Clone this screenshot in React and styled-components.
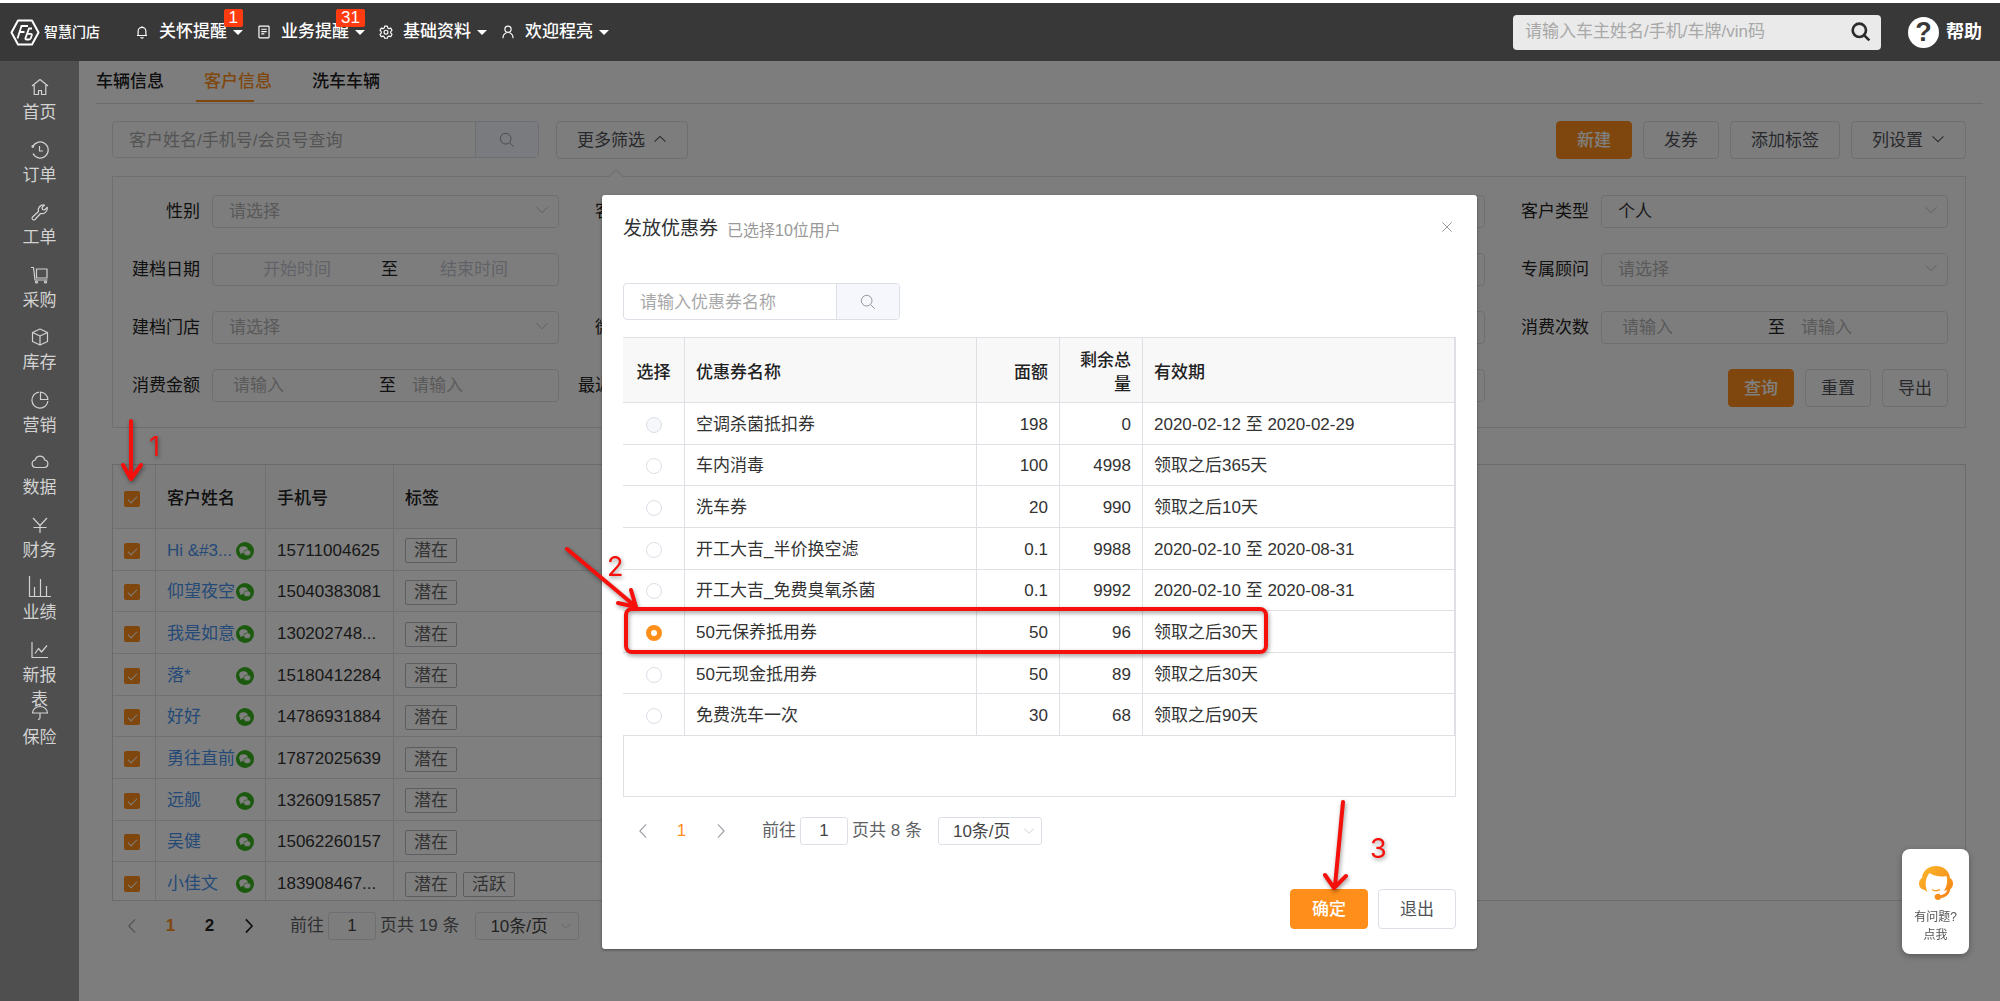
import React, { useState } from "react";
import styled, { createGlobalStyle, css } from "styled-components";

const NAV_ITEMS = [
  { icon: "bell", label: "关怀提醒", badge: "1" },
  { icon: "doc", label: "业务提醒", badge: "31" },
  { icon: "gear", label: "基础资料" },
  { icon: "user", label: "欢迎程亮" },
];

const MENU_ITEMS = [
  { icon: "home", label: "首页" },
  { icon: "history", label: "订单" },
  { icon: "tool", label: "工单" },
  { icon: "cart", label: "采购" },
  { icon: "box", label: "库存" },
  { icon: "pie", label: "营销" },
  { icon: "cloud", label: "数据" },
  { icon: "yen", label: "财务" },
  { icon: "bars", label: "业绩" },
  { icon: "line", label: "新报表" },
  { icon: "umbrella", label: "保险" },
];

const FILTERS = [
  { id: "gender", label: "性别", type: "select" },
  { id: "source", label: "客户来源", type: "select" },
  { id: "level", label: "会员等级", type: "select" },
  { id: "kind", label: "客户类型", type: "select", value: "个人" },
  { id: "created", label: "建档日期", type: "date" },
  { id: "phone", label: "手机号", type: "select" },
  { id: "birthday", label: "生日", type: "date" },
  { id: "adviser", label: "专属顾问", type: "select" },
  { id: "store", label: "建档门店", type: "select" },
  { id: "wechat", label: "微信关注", type: "select" },
  { id: "tag", label: "客户标签", type: "select" },
  { id: "times", label: "消费次数", type: "number" },
  { id: "amount", label: "消费金额", type: "number" },
  { id: "recent", label: "最近到店日", type: "date" },
  { id: "balance", label: "储值余额", type: "number" },
];

const CUSTOMERS = [
  { name: "Hi &#39;小明", phone: "15711004625", tags: ["潜在"], short: "Hi &#3..." },
  { name: "仰望夜空", phone: "15040383081", tags: ["潜在"] },
  { name: "我是如意", phone: "130202748...", tags: ["潜在"] },
  { name: "落*", phone: "15180412284", tags: ["潜在"] },
  { name: "好好", phone: "14786931884", tags: ["潜在"] },
  { name: "勇往直前", phone: "17872025639", tags: ["潜在"] },
  { name: "远舰", phone: "13260915857", tags: ["潜在"] },
  { name: "吴健", phone: "15062260157", tags: ["潜在"] },
  { name: "小佳文", phone: "183908467...", tags: ["潜在", "活跃"] },
];

const COUPONS = [
  { name: "空调杀菌抵扣券", value: "198", left: 0, period: "2020-02-12 至 2020-02-29" },
  { name: "车内消毒", value: "100", left: 4998, period: "领取之后365天" },
  { name: "洗车券", value: "20", left: 990, period: "领取之后10天" },
  { name: "开工大吉_半价换空滤", value: "0.1", left: 9988, period: "2020-02-10 至 2020-08-31" },
  { name: "开工大吉_免费臭氧杀菌", value: "0.1", left: 9992, period: "2020-02-10 至 2020-08-31" },
  { name: "50元保养抵用券", value: "50", left: 96, period: "领取之后30天" },
  { name: "50元现金抵用券", value: "50", left: 89, period: "领取之后30天" },
  { name: "免费洗车一次", value: "30", left: 68, period: "领取之后90天" },
];

const ICONS = {
  bell: (
    <>
      <path d="M4 13.5V8a5 5 0 0 1 10 0v5.500M2.500 13.500h13" />
      <path d="M9 3V1.500M7.500 15.500a1.500 1.500 0 0 0 3 0" />
    </>
  ),
  doc: (
    <>
      <rect x="2.500" y="1.500" width="13" height="15" rx="1" />
      <path d="M5.500 5.500h7M5.500 8.500h7M5.500 11.500h4" />
    </>
  ),
  gear: (
    <>
      <path d="M7.300 1.500h3.400l.6 2.300 1.500.9 2.300-.7 1.700 3-1.700 1.600v1.800l1.700 1.600-1.700 3-2.300-.7-1.500.9-.6 1.800H7.300l-.6-1.800-1.500-.9-2.300.7-1.700-3 1.700-1.600V8.600L1.200 7l1.700-3 2.300.7 1.500-.9z" />
      <circle cx="9" cy="9.300" r="2.500" />
    </>
  ),
  user: (
    <>
      <circle cx="9" cy="5.500" r="4" />
      <path d="M2.500 17c0-4 2-6 4.500-7M15.500 17c0-4-2-6-4.500-7" />
    </>
  ),
  home: <path d="M1 8l8-6.500L17 8M3.200 7v9.500h4.300v-4h3v4h4.300V7" />,
  history: (
    <>
      <path d="M2 5.500A8 8 0 1 1 2 12.500" />
      <path d="M8.500 5v5h3.500" />
      <circle cx="1.800" cy="5.500" r=".8" />
    </>
  ),
  tool: (
    <path d="M1.500 14l6-5.500C6.500 5 9 1.500 13.500 2L11 4.500l.5 2 2 .5 2.800-2.700C17 8.500 13 11.500 9.500 10.500l-5.500 6c-1.700 1.500-4-.8-2.500-2.500z" />
  ),
  cart: (
    <>
      <path d="M0 1.500h2.500l1.500 12.500h12.500" />
      <rect x="5.500" y="3" width="10.500" height="9" />
      <circle cx="5.500" cy="16" r="1" />
      <circle cx="14.500" cy="16" r="1" />
    </>
  ),
  box: <path d="M9 1l7.500 3.500v9L9 17l-7.500-3.500v-9zM1.500 4.500L9 8l7.500-3.500M9 8v9" />,
  pie: (
    <>
      <path d="M9.500 1.100v7.400h7.400A7.900 7.900 0 0 0 9.500 1.100z" />
      <path d="M8 1.200A8 8 0 1 0 16.900 10" />
    </>
  ),
  cloud: (
    <path d="M4.500 14.500a3.800 3.800 0 0 1-.3-7.500C5 4.500 6.800 3.200 9 3.200s4 1.300 4.800 3.800a3.800 3.800 0 0 1-.3 7.500z" />
  ),
  yen: <path d="M2 2l7 7.500L16 2M2.500 11.500h13M9 9.500V17" />,
  bars: <path d="M-1.500-2v20.500h21.500M3.500 18.500V9M9.500 18.500V1M15.500 18.500V8" />,
  line: <path d="M1 1v15.500h16M4 12.500l3.500-5 3 3.500L16 4.500" />,
  umbrella: <path d="M1.500 10a7.500 6.500 0 0 1 15 0zM9 3.500V1.500M9 10v5a1.500 1.500 0 0 1-2 1.200" />,
  search: (
    <>
      <circle cx="7.500" cy="7.500" r="6" />
      <path d="M12 12l4.500 4.500" />
    </>
  ),
  down: <path d="M2 5.500l7 7 7-7" />,
  up: <path d="M2 12.500l7-7 7 7" />,
  left: <path d="M12.500 1.500L5.500 9l7 7.500" />,
  right: <path d="M5.500 1.500l7 7.500-7 7.500" />,
  close: <path d="M2 2l14 14M16 2L2 16" />,
};

function Icon({ name, size = 18, stroke = 1.3 }) {
  return (
    <svg
      width={size}
      height={size}
      viewBox="0 0 18 18"
      fill="none"
      stroke="currentColor"
      strokeWidth={stroke}
      strokeLinejoin="round"
      aria-hidden="true"
    >
      {ICONS[name]}
    </svg>
  );
}

function Logo() {
  return (
    <svg width="30" height="27" viewBox="0 0 30 27" fill="none" stroke="#fff" aria-hidden="true">
      <path d="M8 1.500h14L28.500 13.500 22 25.500H8L1.500 13.500z" strokeWidth="2" strokeLinejoin="round" />
      <path d="M7.500 19.500l4-12.500h6.500M10 13h4.500" strokeWidth="1.800" />
      <path d="M22 9.500h-3l-3.500 9.500c-.3 1 .2 1.500 1 1.500h2.500c1 0 1.500-.4 1.800-1.200l1-3c.3-1-.2-1.500-1-1.500h-4" strokeWidth="1.800" />
    </svg>
  );
}

function WechatIcon() {
  return (
    <svg width="18" height="18" viewBox="0 0 18 18" aria-hidden="true">
      <circle cx="9" cy="9" r="9" fill="#36b41c" />
      <ellipse cx="7.500" cy="7.800" rx="4.300" ry="3.500" fill="#fff" />
      <path d="M4.500 10l-.6 2.300 2.500-1.200z" fill="#fff" />
      <ellipse cx="11.200" cy="10.700" rx="3.500" ry="2.900" fill="#fff" stroke="#36b41c" strokeWidth=".6" />
    </svg>
  );
}

function AgentIcon() {
  return (
    <svg width="34" height="34" viewBox="0 0 34 34" aria-hidden="true">
      <defs>
        <linearGradient id="agent" x1="0" y1="0" x2="1" y2="1">
          <stop offset="0" stopColor="#fbb829" />
          <stop offset="1" stopColor="#f57f17" />
        </linearGradient>
      </defs>
      <path
        d="M17 0C9 0 3.500 5 3 12c-2 1-3 3-3 5.500 0 3.500 2.500 6 6 6.500.8 1 1.500 1.500 2.500 2C6 21 5.500 13 10.500 7c4 3 11 4.500 17 3 1.500 5 .5 10-2.500 15 1.500-.2 2.500-.6 3.500-1.200-1 3-3.500 5-7 5.400-1-2-5-1.800-5.800.8-.5 2.500 1.200 4 3.300 4 1.500 0 2.500-.8 3-2 5-.5 8.500-4 9.500-9 1.600-1.200 2.500-3 2.500-5.500S33 13 31 12C30.500 5 25 0 17 0z"
        fill="url(#agent)"
      />
      <path d="M13 23.500c2 1.500 5.500 1.500 8 0" stroke="#f9a12a" strokeWidth="1.500" fill="none" />
    </svg>
  );
}

function FilterField({ filter }) {
  const { id, label, type, value } = filter;
  return (
    <Field>
      <FieldLabel htmlFor={id}>{label}</FieldLabel>
      {type === "select" && (
        <SelectBox>
          <Select id={id} $filled={Boolean(value)}>
            <option>{value || "请选择"}</option>
          </Select>
          <Icon name="down" size={14} stroke={1.2} />
        </SelectBox>
      )}
      {type !== "select" && (
        <Range>
          <RangeInput id={id} $date={type === "date"} placeholder={type === "date" ? "开始时间" : "请输入"} />
          <span>至</span>
          <RangeInput aria-label={label} $date={type === "date"} placeholder={type === "date" ? "结束时间" : "请输入"} />
        </Range>
      )}
    </Field>
  );
}

function Pagination({ id, pages, total, strong }) {
  return (
    <Pager>
      <PageButton $muted aria-label="上一页">
        <Icon name="left" size={16} />
      </PageButton>
      {pages.map((page) => (
        <PageButton key={page} $active={page === 1} $strong={strong}>
          {page}
        </PageButton>
      ))}
      <PageButton $muted={!strong} aria-label="下一页">
        <Icon name="right" size={16} stroke={strong ? 2 : 1.3} />
      </PageButton>
      <Jump>
        <label htmlFor={id}>前往</label>
        <JumpInput id={id} defaultValue="1" />
        <span>页共 {total} 条</span>
      </Jump>
      <SizeBox>
        <SizeSelect aria-label="每页条数">
          <option>10条/页</option>
        </SizeSelect>
        <Icon name="down" size={12} stroke={1.2} />
      </SizeBox>
    </Pager>
  );
}

function CouponDialog() {
  const [selected, setSelected] = useState(5);

  return (
    <Dialog role="dialog" aria-labelledby="dialog-title">
      <DialogHead>
        <DialogTitle id="dialog-title">发放优惠券</DialogTitle>
        <DialogHint>已选择10位用户</DialogHint>
        <CloseButton aria-label="关闭">
          <Icon name="close" size={12} stroke={1.4} />
        </CloseButton>
      </DialogHead>
      <SearchGroup $width={277}>
        <SearchInput aria-label="优惠券名称" placeholder="请输入优惠券名称" />
        <SearchButton aria-label="搜索">
          <Icon name="search" size={16} stroke={1.1} />
        </SearchButton>
      </SearchGroup>
      <CouponFrame>
        <CouponTable>
          <colgroup>
            <col width="62" />
            <col />
            <col width="83" />
            <col width="83" />
            <col width="312" />
          </colgroup>
          <thead>
            <tr>
              <Th $align="center">选择</Th>
              <Th>优惠券名称</Th>
              <Th $align="right">面额</Th>
              <Th $align="right">剩余总量</Th>
              <Th>有效期</Th>
            </tr>
          </thead>
          <tbody>
            {COUPONS.map((coupon, index) => (
              <tr key={coupon.name}>
                <Td $align="center">
                  <Radio
                    type="radio"
                    name="coupon"
                    aria-label={coupon.name}
                    disabled={coupon.left === 0}
                    checked={selected === index}
                    onChange={() => setSelected(index)}
                  />
                </Td>
                <Td>{coupon.name}</Td>
                <Td $align="right">{coupon.value}</Td>
                <Td $align="right">{coupon.left}</Td>
                <Td>{coupon.period}</Td>
              </tr>
            ))}
          </tbody>
        </CouponTable>
      </CouponFrame>
      <Pagination id="coupon-page" pages={[1]} total={8} />
      <DialogFoot>
        <Button $primary $pad={21}>确定</Button>
        <Button $pad={21}>退出</Button>
      </DialogFoot>
      <Marks width="875" height="755" viewBox="0 0 875 755">
        <rect x="24" y="414" width="640" height="43" rx="6" />
        <path d="M-35 354L33 411M29 395l5 17-18-4" />
        <text x="5" y="381">2</text>
        <path d="M741 607l-8 84M723 680l9 13 12-12" />
        <text x="768" y="663">3</text>
      </Marks>
    </Dialog>
  );
}

export default function App() {
  return (
    <Page>
      <GlobalStyle />
      <Header>
        <Brand href="#">
          <Logo />
          <span>智慧门店</span>
        </Brand>
        <TopNav>
          {NAV_ITEMS.map((item) => (
            <NavItem key={item.label} href="#">
              <Icon name={item.icon} size={14} stroke={1.5} />
              <span>{item.label}</span>
              <Caret />
              {item.badge && <Badge>{item.badge}</Badge>}
            </NavItem>
          ))}
        </TopNav>
        <GlobalSearch>
          <GlobalInput aria-label="全局搜索" placeholder="请输入车主姓名/手机/车牌/vin码" />
          <GlobalButton aria-label="搜索">
            <Icon name="search" size={20} stroke={2.4} />
          </GlobalButton>
        </GlobalSearch>
        <Help href="#">
          <HelpMark>?</HelpMark>
          帮助
        </Help>
      </Header>

      <Body>
        <Sidebar>
          {MENU_ITEMS.map((item) => (
            <MenuItem key={item.label} href="#">
              <Icon name={item.icon} stroke={1.2} />
              <span>{item.label}</span>
            </MenuItem>
          ))}
        </Sidebar>

        <Main>
          <Tabs>
            <Tab href="#">车辆信息</Tab>
            <Tab href="#" $active>
              客户信息
            </Tab>
            <Tab href="#">洗车车辆</Tab>
          </Tabs>

          <Content>
            <Toolbar>
              <SearchGroup $width={427}>
                <SearchInput aria-label="客户查询" placeholder="客户姓名/手机号/会员号查询" />
                <SearchButton aria-label="搜索">
                  <Icon name="search" size={16} stroke={1.1} />
                </SearchButton>
              </SearchGroup>
              <Button $pad={20}>
                更多筛选
                <Icon name="up" size={14} />
              </Button>
              <Actions>
                <Button $primary $pad={20}>新建</Button>
                <Button $pad={20}>发券</Button>
                <Button $pad={20}>添加标签</Button>
                <Button $pad={20}>
                  列设置
                  <Icon name="down" size={14} />
                </Button>
              </Actions>
            </Toolbar>

            <Filters>
              <Pointer />
              {FILTERS.map((filter) => (
                <FilterField key={filter.id} filter={filter} />
              ))}
              <FilterActions>
                <Button $primary $pad={15}>查询</Button>
                <Button $pad={15}>重置</Button>
                <Button $pad={15}>导出</Button>
              </FilterActions>
            </Filters>

            <CustomerFrame>
              <CustomerTable>
                <colgroup>
                  <col width="43" />
                  <col width="110" />
                  <col width="128" />
                  <col />
                </colgroup>
                <thead>
                  <tr>
                    <Th>
                      <Checkbox type="checkbox" defaultChecked aria-label="全选" />
                    </Th>
                    <Th>客户姓名</Th>
                    <Th>手机号</Th>
                    <Th>标签</Th>
                  </tr>
                </thead>
                <tbody>
                  {CUSTOMERS.map((customer) => (
                    <tr key={customer.name}>
                      <Td>
                        <Checkbox type="checkbox" defaultChecked aria-label={customer.name} />
                      </Td>
                      <Td>
                        <NameCell>
                          <a href="#" title={customer.name}>
                            {customer.short || customer.name}
                          </a>
                          <WechatIcon />
                        </NameCell>
                      </Td>
                      <Td>{customer.phone}</Td>
                      <Td>
                        <Tags>
                          {customer.tags.map((tag) => (
                            <Tag key={tag}>{tag}</Tag>
                          ))}
                        </Tags>
                      </Td>
                    </tr>
                  ))}
                </tbody>
              </CustomerTable>
            </CustomerFrame>
            <Pagination id="customer-page" pages={[1, 2]} total={19} strong />
          </Content>

          <Overlay>
            <CouponDialog />
          </Overlay>
          <Marks width="140" height="520" viewBox="0 0 140 520">
            <path d="M52 360v57M44 404l8 14 10-14" />
            <text x="70" y="395">1</text>
          </Marks>
        </Main>
      </Body>

      <Support>
        <AgentIcon />
        <span>有问题?</span>
        <span>点我</span>
      </Support>
    </Page>
  );
}

const GlobalStyle = createGlobalStyle`
  * {
    box-sizing: border-box;
  }

  body {
    margin: 0;
    background: #fbfbfb;
    color: #222;
    font-size: 17px;
    line-height: 24px;
  }

  body, button, input, select {
    font-family: "Liberation Sans", "Noto Sans CJK SC", sans-serif;
  }

  button, input, select {
    font-size: 17px;
    margin: 0;
  }

  button {
    cursor: pointer;
  }

  a {
    color: inherit;
    text-decoration: none;
  }

  svg {
    flex: none;
    overflow: visible;
  }
`;

const Page = styled.div`
  display: flex;
  flex-direction: column;
  min-height: 100vh;
`;

const Header = styled.header`
  display: flex;
  align-items: center;
  height: 61px;
  padding: 0 18px 0 10px;
  background: #383838;
  border-top: 3px solid #fff;
  color: #fff;
`;

const Brand = styled.a`
  display: flex;
  align-items: center;
  gap: 4px;
  width: 125px;
  font-size: 14px;
  font-weight: 500;
`;

const TopNav = styled.nav`
  display: flex;
  gap: 14px;
`;

const NavItem = styled.a`
  position: relative;
  display: flex;
  align-items: center;
  font-weight: 500;

  span {
    margin-left: 10px;
  }
`;

const Caret = styled.i`
  margin-left: 6px;
  border: 5px solid transparent;
  border-top-color: #fff;
  border-bottom: 0;
`;

const Badge = styled.b`
  position: absolute;
  right: 0;
  bottom: 17px;
  padding: 0 5px;
  border-radius: 2px;
  background: #ff3b0f;
  font-weight: 400;
  line-height: 18px;
`;

const GlobalSearch = styled.div`
  display: flex;
  align-items: center;
  width: 368px;
  height: 35px;
  margin-left: auto;
  padding: 0 10px 0 12px;
  border-radius: 4px;
  background: #eaeaea;
`;

const inputReset = css`
  min-width: 0;
  border: 0;
  outline: 0;
  background: none;
  color: inherit;

  &::placeholder {
    color: #a8a8a8;
    opacity: 1;
  }
`;

const GlobalInput = styled.input`
  ${inputReset}
  flex: 1;
  padding: 0;
  color: #333;
`;

const GlobalButton = styled.button`
  display: flex;
  padding: 0;
  border: 0;
  background: none;
  color: #2b2b2b;
`;

const Help = styled.a`
  display: flex;
  align-items: center;
  gap: 7px;
  margin-left: 27px;
  font-size: 18px;
  font-weight: 700;
`;

const HelpMark = styled.span`
  width: 31px;
  height: 31px;
  border-radius: 50%;
  background: #fff;
  color: #383838;
  font-size: 27px;
  line-height: 31px;
  text-align: center;
`;

const Body = styled.div`
  display: flex;
  flex: 1;
`;

const Sidebar = styled.nav`
  display: grid;
  flex: none;
  align-content: start;
  grid-template-rows: repeat(11, minmax(0, 1fr));
  justify-items: center;
  width: 79px;
  height: 701px;
  padding-top: 13px;
  color: #d2d2d2;
  background: #4f4f4f;
  box-shadow: 0 240px #4f4f4f;
`;

const MenuItem = styled.a`
  display: flex;
  flex-direction: column;
  align-items: center;
  gap: 5px;
  width: 36px;
  padding-top: 4px;
  text-align: center;
`;

const Main = styled.main`
  position: relative;
  flex: 1;
  min-width: 0;
`;

const Tabs = styled.nav`
  display: flex;
  gap: 40px;
  height: 43px;
  margin: 0 17px;
  border-bottom: 1px solid #d8dade;
`;

const Tab = styled.a`
  display: flex;
  align-items: center;
  height: 41px;
  color: ${(props) => (props.$active ? "#ff8f1a" : "#1c1c1c")};
  font-weight: 500;

  ${(props) =>
    props.$active &&
    css`
      position: relative;

      &::after {
        content: "";
        position: absolute;
        left: -8px;
        bottom: 0;
        width: 58px;
        height: 2px;
        background: #ff8f1a;
      }
    `}
`;

const Content = styled.section`
  padding: 17px 34px 0 33px;
`;

const Toolbar = styled.div`
  display: flex;
  align-items: flex-start;
  gap: 17px;
`;

const SearchGroup = styled.div`
  display: flex;
  width: ${(props) => props.$width}px;
  height: 37px;
  border: 1px solid #dcdfe6;
  border-radius: 4px;
  overflow: hidden;
`;

const SearchInput = styled.input`
  ${inputReset}
  flex: 1;
  padding: 2px 16px 0;
`;

const SearchButton = styled.button`
  display: flex;
  align-items: center;
  justify-content: center;
  width: 63px;
  border: 0;
  border-left: 1px solid #dcdfe6;
  background: #f5f7fc;
  color: #909399;
`;

const Button = styled.button`
  display: flex;
  align-items: center;
  gap: 8px;
  height: 38px;
  padding: 0 ${(props) => props.$pad}px 3px;
  border: 1px solid ${(props) => (props.$primary ? "#ff8f1a" : "#dcdfe6")};
  border-radius: 4px;
  background: ${(props) => (props.$primary ? "#ff8f1a" : "transparent")};
  color: ${(props) => (props.$primary ? "#fff" : "#505358")};
  font-weight: ${(props) => (props.$primary ? 500 : 400)};
  white-space: nowrap;
`;

const Actions = styled.div`
  display: flex;
  gap: 11px;
  margin-left: auto;
`;

const Filters = styled.form`
  position: relative;
  display: grid;
  grid-template-columns: repeat(4, 1fr);
  row-gap: 25px;
  margin-top: 17px;
  padding: 18px 0 25px;
  border: 1px solid #dcdfe6;
`;

const Pointer = styled.i`
  position: absolute;
  top: -6px;
  left: 498px;
  width: 10px;
  height: 10px;
  border: solid #dcdfe6;
  border-width: 1px 0 0 1px;
  background: #fbfbfb;
  transform: rotate(45deg);
`;

const Field = styled.div`
  display: flex;
  align-items: center;
  height: 33px;
  padding-right: 17px;
`;

const FieldLabel = styled.label`
  width: 99px;
  padding-right: 12px;
  text-align: right;
  white-space: nowrap;
`;

const SelectBox = styled.div`
  position: relative;
  flex: 1;

  svg {
    position: absolute;
    right: 10px;
    top: 8px;
    color: #b4b8c0;
    pointer-events: none;
  }
`;

const Select = styled.select`
  width: 100%;
  height: 33px;
  padding: 0 16px;
  border: 1px solid #dcdfe6;
  border-radius: 4px;
  background: none;
  color: ${(props) => (props.$filled ? "#333" : "#b4b4b4")};
  appearance: none;
`;

const Range = styled.div`
  display: flex;
  flex: 1;
  align-items: center;
  height: 33px;
  border: 1px solid #dcdfe6;
  border-radius: 4px;
`;

const RangeInput = styled.input`
  ${inputReset}
  flex: 1;
  width: 0;
  padding: 0 ${(props) => (props.$date ? 8 : 20)}px;
  text-align: ${(props) => (props.$date ? "center" : "left")};

  span + & {
    padding-left: ${(props) => (props.$date ? 0 : 16)}px;
  }

  &::placeholder {
    color: ${(props) => (props.$date ? "#c4c6d0" : "#b4b4b4")};
  }
`;

const FilterActions = styled.div`
  display: flex;
  grid-column: 4;
  justify-content: flex-end;
  gap: 11px;
  height: 33px;
  padding-right: 17px;
`;

const CustomerFrame = styled.div`
  height: 437px;
  margin-top: 36px;
  border: 1px solid #d4d6da;
  overflow: hidden;
`;

const tableStyle = css`
  border-collapse: separate;
  border-spacing: 0;
  table-layout: fixed;
`;

const CustomerTable = styled.table`
  ${tableStyle}
  width: 1000px;
  height: 440px;
  border-left: 1px solid #dcdfe6;
  margin: -1px 0 0 -1px;
`;

const CouponFrame = styled.div`
  height: 460px;
  margin: 17px 0 20px;
  border: 1px solid #dfe0e6;
`;

const CouponTable = styled.table`
  ${tableStyle}
  width: calc(100% + 1px);
  height: 399px;
  margin: -1px 0 0 -1px;
  border-top: 1px solid #dfe0e6;
`;

const Th = styled.th`
  height: 65px;
  padding: 5px 11px 0;
  border: solid #dfe0e6;
  border-width: 0 1px 1px 0;
  background: #f8f8f9;
  color: #222;
  font-weight: 500;
  text-align: ${(props) => props.$align || "left"};
`;

const Td = styled.td`
  padding: 3px 11px 0;
  border: solid #dfe0e6;
  border-width: 0 1px 1px 0;
  background: #fff;
  color: #333;
  text-align: ${(props) => props.$align || "left"};
  white-space: nowrap;
`;

const Checkbox = styled.input`
  display: block;
  position: relative;
  width: 16px;
  height: 16px;
  border-radius: 2px;
  background: #ff8f1a;
  appearance: none;

  &:checked::after {
    content: "";
    position: absolute;
    left: 6px;
    top: 3px;
    width: 4px;
    height: 8px;
    border: solid #fff;
    border-width: 0 1px 1px 0;
    transform: rotate(45deg);
  }
`;

const Radio = styled.input`
  display: block;
  width: 16px;
  height: 16px;
  margin: 0 auto;
  border: 1px solid #dcdfe6;
  border-radius: 50%;
  background: #fff;
  appearance: none;

  &:disabled {
    background: #f5f7fa;
  }

  &:checked {
    border: 5px solid #ff8f1a;
  }
`;

const NameCell = styled.div`
  display: flex;
  align-items: center;
  justify-content: space-between;
  color: #4a94ee;
`;

const Tags = styled.div`
  display: flex;
  gap: 6px;
`;

const Tag = styled.span`
  padding: 0 8px;
  border: 1px solid #b8babe;
  border-radius: 2px;
  color: #666;
  line-height: 23px;
`;

const Pager = styled.div`
  display: flex;
  align-items: center;
  margin-top: 11px;
  color: #606266;
`;

const PageButton = styled.button`
  display: flex;
  align-items: center;
  justify-content: center;
  width: 39px;
  height: 28px;
  padding: 0;
  border: 0;
  background: none;
  color: ${(props) => (props.$active ? "#ff8f1a" : props.$muted ? "#a0a3aa" : "#222")};
  font-weight: ${(props) => (props.$strong ? 700 : 400)};
`;

const Jump = styled.div`
  display: flex;
  align-items: center;
  gap: 4px;
  margin: 0 16px 0 22px;
`;

const JumpInput = styled.input`
  width: 48px;
  height: 28px;
  padding: 0;
  border: 1px solid #dcdfe6;
  border-radius: 3px;
  background: none;
  color: #444;
  text-align: center;
`;

const SizeBox = styled.div`
  position: relative;

  svg {
    position: absolute;
    right: 7px;
    top: 8px;
    color: #c0c4cc;
    pointer-events: none;
  }
`;

const SizeSelect = styled.select`
  width: 104px;
  height: 28px;
  padding: 0 0 0 14px;
  border: 1px solid #dcdfe6;
  border-radius: 3px;
  background: none;
  color: #444;
  appearance: none;
`;

const Overlay = styled.div`
  position: absolute;
  inset: 0;
  display: flex;
  align-items: flex-start;
  justify-content: center;
  padding-top: 134px;
  background: rgba(0, 0, 0, 0.5);
`;

const Dialog = styled.div`
  position: relative;
  width: 875px;
  padding: 20px 21px;
  border-radius: 3px;
  background: #fff;
  box-shadow: 0 1px 3px rgba(0, 0, 0, 0.4);
`;

const DialogHead = styled.div`
  display: flex;
  align-items: flex-start;
  height: 28px;
  margin-bottom: 40px;
`;

const DialogTitle = styled.h2`
  margin: 0;
  color: #303133;
  font-size: 19px;
  font-weight: 400;
  line-height: 28px;
`;

const DialogHint = styled.span`
  margin-left: 9px;
  color: #999;
  font-size: 16px;
  line-height: 32px;
`;

const CloseButton = styled.button`
  display: flex;
  margin-left: auto;
  padding: 6px 3px;
  border: 0;
  background: none;
  color: #909399;
`;

const DialogFoot = styled.div`
  display: flex;
  justify-content: flex-end;
  gap: 10px;
  margin-top: 44px;

  button {
    height: 40px;
  }
`;

/* numbered arrows of the walkthrough */
const Marks = styled.svg`
  position: absolute;
  top: 0;
  left: 0;
  pointer-events: none;
  fill: none;
  stroke: #f5100c;
  stroke-width: 4;
  stroke-linecap: round;
  stroke-linejoin: round;
  filter: drop-shadow(1px 2px 2px rgba(0, 0, 0, 0.4));

  text {
    fill: #f5100c;
    stroke: none;
    font-family: Inter, sans-serif;
    font-size: 27px;
  }
`;

const Support = styled.button`
  position: fixed;
  right: 31px;
  bottom: 47px;
  display: flex;
  flex-direction: column;
  align-items: center;
  width: 67px;
  height: 105px;
  padding: 17px 0 0;
  border: 0;
  border-radius: 8px;
  background: #fff;
  box-shadow: 0 2px 6px rgba(0, 0, 0, 0.3);
  color: #555;
  font-size: 12px;
  line-height: 18px;

  svg {
    margin-bottom: 8px;
  }
`;
